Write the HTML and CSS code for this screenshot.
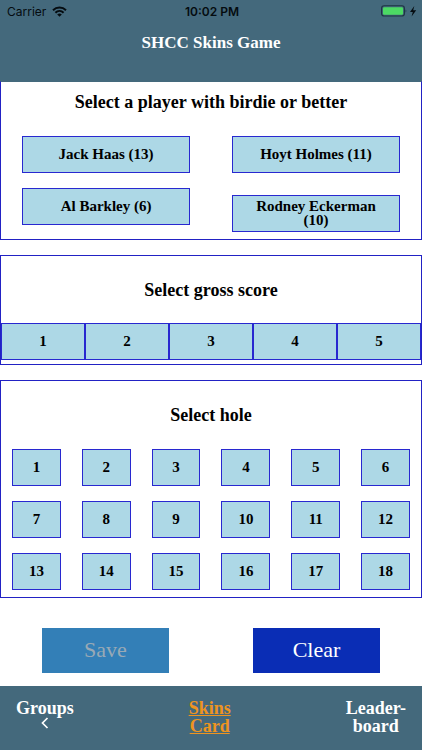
FILE: index.html
```html
<!DOCTYPE html>
<html lang="en">
<head>
<meta charset="utf-8">
<meta name="viewport" content="width=device-width, initial-scale=1">
<title>SHCC Skins Game</title>
<link rel="stylesheet" href="styles.css">
</head>
<body>
<header class="header">
  <div class="status">
    <div class="status-left">
      <span>Carrier</span>
      <svg width="15" height="11" viewBox="0 0 15 11" aria-hidden="true">
        <g fill="none" stroke="#050c10" stroke-width="2">
          <path d="M1 4.2a9.4 9.4 0 0 1 13 0"/>
          <path d="M3.4 6.7a6 6 0 0 1 8.2 0"/>
        </g>
        <path d="M5.2 8.5a3.4 3.4 0 0 1 4.6 0L7.500 10.800z" fill="#050c10"/>
      </svg>
    </div>
    <span class="clock">10:02 PM</span>
    <div class="status-right">
      <svg width="36" height="12" viewBox="0 0 36 12" aria-hidden="true">
        <rect x=".6" y=".8" width="22.800" height="10.200" rx="2.600" fill="none" stroke="#1d3441" stroke-width="1.100"/>
        <rect x="2" y="2.200" width="20" height="7.500" rx="1.200" fill="#4cd964"/>
        <path d="M24.600 4.200q1.500 1.700 0 3.600z" fill="#1d3441"/>
        <path d="M33.300.9 29 6.900h2.800L30.600 11.500 35.200 5.200h-3z" fill="#050c10"/>
      </svg>
    </div>
  </div>
  <h1 class="title">SHCC Skins Game</h1>
</header>
<main class="main">
  <section class="panel players">
    <h2>Select a player with birdie or better</h2>
    <div class="player-grid">
      <button class="choice">Jack Haas (13)</button>
      <button class="choice">Hoyt Holmes (11)</button>
      <button class="choice">Al Barkley (6)</button>
      <button class="choice">Rodney Eckerman (10)</button>
    </div>
  </section>
  <section class="panel scores">
    <h2>Select gross score</h2>
    <div class="score-row">
      <button class="choice">1</button>
      <button class="choice">2</button>
      <button class="choice">3</button>
      <button class="choice">4</button>
      <button class="choice">5</button>
    </div>
  </section>
  <section class="panel holes">
    <h2>Select hole</h2>
    <div class="hole-grid">
      <button class="choice">1</button>
      <button class="choice">2</button>
      <button class="choice">3</button>
      <button class="choice">4</button>
      <button class="choice">5</button>
      <button class="choice">6</button>
      <button class="choice">7</button>
      <button class="choice">8</button>
      <button class="choice">9</button>
      <button class="choice">10</button>
      <button class="choice">11</button>
      <button class="choice">12</button>
      <button class="choice">13</button>
      <button class="choice">14</button>
      <button class="choice">15</button>
      <button class="choice">16</button>
      <button class="choice">17</button>
      <button class="choice">18</button>
    </div>
  </section>
  <div class="actions">
    <button class="action save" disabled>Save</button>
    <button class="action clear">Clear</button>
  </div>
</main>
<nav class="tabs">
  <a class="tab groups" href="#groups">Groups
    <svg width="8" height="12" viewBox="0 0 8 12" aria-hidden="true"><path d="M6.500 1 1.500 6l5 5" fill="none" stroke="#fff" stroke-width="1.700"/></svg>
  </a>
  <a class="tab active" href="#skins" aria-current="page">Skins<br>Card</a>
  <a class="tab" href="#leaderboard">Leader-<br>board</a>
</nav>
</body>
</html>
```
FILE: styles.css
```css
* {
  box-sizing: border-box;
}

body {
  margin: 0;
  min-height: 100vh;
  display: flex;
  flex-direction: column;
  background: #fff;
  color: #000;
  font-family: Palatino, "Palatino Linotype", "Liberation Serif", serif;
}

button {
  font-family: inherit;
}

.header {
  height: 81px;
  background: #44697c;
}

.status {
  display: grid;
  grid-template-columns: 1fr auto 1fr;
  align-items: center;
  height: 22px;
  padding: 0 5px 0 7px;
  color: #050c10;
  font-family: Inter, Roboto, sans-serif;
  font-size: 12px;
}

.status-left {
  display: flex;
  align-items: center;
  gap: 6px;
}

.status-right {
  display: flex;
  justify-content: flex-end;
}

.clock {
  font-weight: 600;
}

.title {
  margin: 11px 0 0;
  color: #fff;
  font-size: 17px;
  line-height: 20px;
  text-align: center;
}

.main {
  display: flex;
  flex-direction: column;
  gap: 15px;
}

.panel {
  border: 1px solid #2222c4;
}

.panel h2 {
  margin: 0;
  font-size: 18px;
  line-height: 22px;
  text-align: center;
}

.choice {
  height: 37px;
  padding: 0 16px 1px;
  border: 1px solid #2828d0;
  border-radius: 0;
  background: #add8e6;
  color: #000;
  font-size: 15px;
  font-weight: bold;
  line-height: 14px;
}

.players {
  padding: 9px 5% 7px;
  border-top-color: #44697c;
}

.player-grid {
  display: grid;
  grid-template-columns: 1fr 1fr;
  align-items: baseline;
  gap: 15px 42px;
  margin-top: 23px;
}

.scores {
  padding: 23px 0 4px;
}

.score-row {
  display: grid;
  grid-template-columns: repeat(5, 1fr);
  margin-top: 22px;
}

.holes {
  padding: 23px 11px 7px;
}

.hole-grid {
  display: grid;
  grid-template-columns: repeat(6, 1fr);
  gap: 15px 21px;
  margin-top: 23px;
}

.score-row .choice,
.hole-grid .choice {
  padding: 0 0 1px;
}

.actions {
  display: grid;
  grid-template-columns: 30% 30%;
  justify-content: space-around;
  margin: 15px 0 13px;
}

.action {
  height: 45px;
  padding: 0 0 2px;
  border: 0;
  border-radius: 0;
  font-size: 22px;
}

.save {
  background: #337fb7;
  color: #99a9b5;
}

.clear {
  background: #0a2db5;
  color: #fff;
}

.tabs {
  display: flex;
  flex: 1;
  justify-content: space-between;
  align-items: flex-start;
  padding: 13px 16px 0;
  background: #44697c;
}

.tab {
  color: #fff;
  font-size: 18px;
  font-weight: bold;
  line-height: 18px;
  text-align: center;
  text-decoration: none;
}

.tabs .groups {
  display: flex;
  flex-direction: column;
  align-items: center;
}

.tabs .active {
  color: #ee9420;
  text-decoration: underline;
}
```
